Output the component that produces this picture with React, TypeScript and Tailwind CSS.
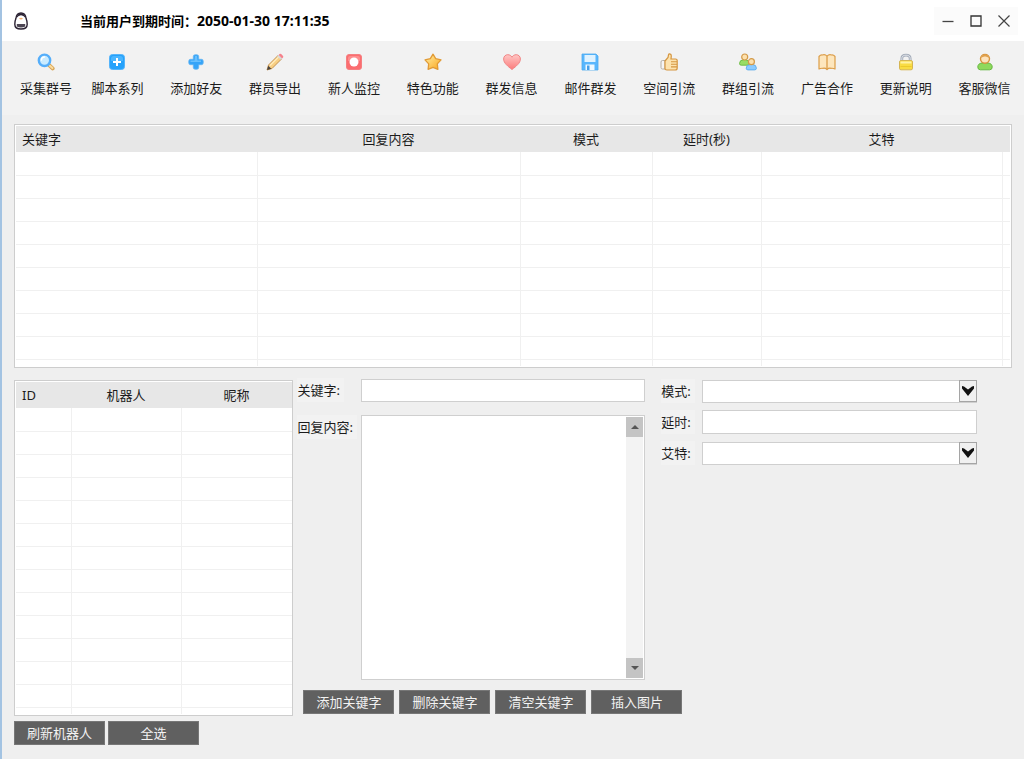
import React from "react";

const SearchIcon = () => (
  <svg className="w-[18px] h-[18px]" viewBox="0 0 18 18" fill="none">
    <path d="M12.400 12.400l3.200 3" stroke="#d9a555" strokeWidth="4" strokeLinecap="round" />
    <path d="M12.800 12.700l2.600 2.400" stroke="#fbdc9f" strokeWidth="2" strokeLinecap="round" />
    <circle cx="7.500" cy="7.300" r="5.700" fill="#c9ebff" stroke="#55aefa" strokeWidth="2.400" />
    <path d="M4.500 7a3 3 0 013-3" stroke="#fff" strokeWidth="1.400" strokeLinecap="round" />
  </svg>
);

const PlusBoxIcon = () => (
  <svg className="w-[18px] h-[18px]" viewBox="0 0 18 18" fill="none">
    <rect x="1.500" y="1.500" width="15" height="15" rx="3" fill="#25a2fb" stroke="#55b4fb" />
    <path d="M3 5.500C3 4 4 3 5.500 3h7C14 3 15 4 15 5.500V8H3z" fill="#4ab5ff" />
    <path d="M9 5v8M5 9h8" stroke="#fff" strokeWidth="2" />
  </svg>
);

const PlusIcon = () => (
  <svg className="w-[18px] h-[18px]" viewBox="0 0 18 18">
    <path d="M8 1.800h2q1.700 0 1.700 1.700v2.800h2.800q1.700 0 1.700 1.700v2q0 1.700-1.700 1.700h-2.800v2.800q0 1.700-1.700 1.700H8q-1.700 0-1.700-1.700v-2.800H3.500q-1.700 0-1.700-1.700V8q0-1.700 1.700-1.700h2.800V3.500q0-1.700 1.700-1.700z" fill="#35a4f8" stroke="#62b4f3" strokeWidth=".8" />
    <path d="M8 3h2l.5 4.500H14V9H3.500V7.500h4z" fill="#68bffd" />
  </svg>
);

const PencilIcon = () => (
  <svg className="w-[18px] h-[18px]" viewBox="0 0 18 18">
    <path d="M1 17l1.500-5L12 2.500l3.500 3.500L6 15.500z" fill="#f8cf84" stroke="#bc8845" strokeWidth=".9" />
    <path d="M4 12.500L12.500 4" stroke="#ffecbb" strokeWidth="1.500" />
    <path d="M1 17l1.300-4.300 3 3z" fill="#4a4540" />
    <path d="M11.200 3.300l1.400-1.400 3.500 3.500-1.400 1.400z" fill="#d7d9dd" />
    <path d="M12.600 1.900l.9-.9q.9-.7 1.700.1l1.800 1.800q.7.800 0 1.600l-.9.9z" fill="#f5818b" />
  </svg>
);

const RecordIcon = () => (
  <svg className="w-[18px] h-[18px]" viewBox="0 0 18 18">
    <rect x="1.500" y="1.500" width="15" height="15" rx="2.500" fill="#fb6d70" stroke="#f57f80" />
    <path d="M3 5q0-2 2-2h8q2 0 2 2v3H3z" fill="#fd8d8e" />
    <circle cx="9" cy="9" r="4.500" fill="#fff" />
  </svg>
);

const StarIcon = () => (
  <svg className="w-[18px] h-[18px]" viewBox="0 0 18 18">
    <defs>
      <linearGradient id="starFill" x1="0" y1="0" x2="1" y2="1">
        <stop offset="0" stopColor="#fff0a8" />
        <stop offset="1" stopColor="#fba61d" />
      </linearGradient>
    </defs>
    <path d="M9 1.200l2.700 4.500 5.300 1.200-3.700 4 .6 5.400L9 14.300l-4.900 2 .6-5.400-3.700-4 5.300-1.200z" fill="url(#starFill)" stroke="#e19a35" strokeWidth="1.300" strokeLinejoin="round" />
  </svg>
);

const HeartIcon = () => (
  <svg className="w-[18px] h-[18px]" viewBox="0 0 18 18">
    <defs>
      <linearGradient id="heartFill" x1="0" y1="0" x2="0" y2="1">
        <stop offset="0" stopColor="#ffc7c5" />
        <stop offset="1" stopColor="#fb7b7b" />
      </linearGradient>
    </defs>
    <path d="M9 16.500C5 13.500.600 10 .600 6.100.600 3.300 2.600 1.700 4.800 1.700 6.700 1.700 8.200 2.700 9 4.200c.8-1.500 2.300-2.500 4.200-2.500 2.200 0 4.200 1.600 4.200 4.400 0 3.900-4.400 7.400-8.400 10.400z" fill="url(#heartFill)" stroke="#f08484" />
  </svg>
);

const DiskIcon = () => (
  <svg className="w-[18px] h-[18px]" viewBox="0 0 18 18">
    <path d="M1 1h14l2 2v14H1z" fill="#58b6fd" stroke="#4da9ef" strokeWidth=".8" />
    <path d="M3.500 2h11v7h-11z" fill="#dff2ff" />
    <path d="M4.500 11.500h9V17h-9z" fill="#eef8ff" />
    <path d="M6 12.500h2.500V17H6z" fill="#469fe8" />
  </svg>
);

const ThumbIcon = () => (
  <svg className="w-[18px] h-[18px]" viewBox="0 0 18 18">
    <path d="M1 9q0-1.500 1.500-1.500H5V16H2.500Q1 16 1 14.500z" fill="#f5f5f5" stroke="#b5b0a6" />
    <path d="M5 8l3-3.500.5-2.700Q8.700.800 9.700.900q1.700.2 1.600 2.100L11 6h4.500q1.700 0 1.700 1.500V15q0 2-2 2H7q-2 0-2-1.500z" fill="#fde3ae" stroke="#d59640" strokeWidth="1.200" />
    <path d="M11 8.700h6M11 11.300h6M11 13.900h6" stroke="#d59640" strokeWidth="1.100" />
  </svg>
);

const GroupIcon = () => (
  <svg className="w-[18px] h-[18px]" viewBox="0 0 18 18">
    <path d="M.500 10.500Q.500 7 4.500 6.700h2.200q3.400.5 3.400 3.800 0 1.700-1.700 1.700H2.200q-1.700 0-1.700-1.700z" fill="#99dd65" stroke="#68b93f" strokeWidth=".9" />
    <circle cx="5.700" cy="4" r="3" fill="#fde0ac" stroke="#d39a49" strokeWidth="1.200" />
    <path d="M7.200 15.200q0-3.400 4-3.700h2.400q3.800.3 3.800 3.700 0 1.700-1.700 1.700H8.900q-1.700 0-1.700-1.700z" fill="#8ccbff" stroke="#5aabec" strokeWidth=".9" />
    <circle cx="12.400" cy="8.700" r="3" fill="#fde0ac" stroke="#d39a49" strokeWidth="1.200" />
  </svg>
);

const BookIcon = () => (
  <svg className="w-[18px] h-[18px]" viewBox="0 0 18 18">
    <path d="M9 3.200Q7 1 4.500 2 2.500 1.700 1 3.500V16q2-1 4-.7 2.400-.4 4 1.200 1.600-1.600 4-1.200 2-.3 4 .7V3.500Q15.500 1.700 13.500 2 11 1 9 3.200z" fill="#fde6bd" stroke="#dc9d47" strokeWidth="1.200" strokeLinejoin="round" />
    <path d="M9 3.200v13" stroke="#dc9d47" strokeWidth="1.300" />
  </svg>
);

const LockIcon = () => (
  <svg className="w-[18px] h-[18px]" viewBox="0 0 18 18" fill="none">
    <path d="M4.800 8V5.700Q4.800 2.200 9 2.200t4.200 3.500V8" stroke="#a5adba" strokeWidth="2.800" />
    <path d="M4.800 8V5.700Q4.800 2.200 9 2.200t4.200 3.500V8" stroke="#dde1e8" />
    <rect x="2.500" y="7.500" width="13" height="9.300" rx="1.500" fill="#f9dc43" stroke="#d5b553" />
    <path d="M3.500 9.500h11" stroke="#fff2a4" strokeWidth="2" />
    <path d="M3.500 13.500h11" stroke="#ecca2d" />
  </svg>
);

const UserIcon = () => (
  <svg className="w-[18px] h-[18px]" viewBox="0 0 18 18">
    <path d="M1.800 14Q1.800 10.500 6 10h6q4.200.5 4.200 4 0 2.800-2.500 2.800H4.300Q1.800 16.800 1.800 14z" fill="#8fd95c" stroke="#67b843" />
    <ellipse cx="9" cy="5.800" rx="4.500" ry="4.400" fill="#fde3bd" stroke="#d7953f" strokeWidth="1.400" />
    <path d="M5 5Q5.500 1.500 9 1.500T13 5Q11 3.300 9 3.500 7 3.300 5 5z" fill="#e0a04c" />
  </svg>
);

const PenguinLogo = () => (
  <svg className="w-[14px] h-[18px]" viewBox="0 0 14 18">
    <path d="M7 1C4 1 2.300 3.300 1.900 6.500 1 8.500.800 10.500.800 12.200.800 15.300 3 17 7 17s6.200-1.700 6.200-4.800c0-1.700-.2-3.700-1.100-5.700C11.700 3.300 10 1 7 1z" fill="#fff" stroke="#2b2233" strokeWidth="1.400" />
    <path d="M2.500 6Q3.400 1.300 7 1.300T11.500 6Q9.500 3.300 7 3.300T2.500 6z" fill="#2b2233" />
    <path d="M5 6.500q2-1.300 4 0-2 1.800-4 0z" fill="#f9b36f" />
    <path d="M2.800 12h8.400v2.600q-4.200 2-8.400 0z" fill="#4c4553" />
  </svg>
);

const tools = [
  { label: "采集群号", Icon: SearchIcon },
  { label: "脚本系列", Icon: PlusBoxIcon },
  { label: "添加好友", Icon: PlusIcon },
  { label: "群员导出", Icon: PencilIcon },
  { label: "新人监控", Icon: RecordIcon },
  { label: "特色功能", Icon: StarIcon },
  { label: "群发信息", Icon: HeartIcon },
  { label: "邮件群发", Icon: DiskIcon },
  { label: "空间引流", Icon: ThumbIcon },
  { label: "群组引流", Icon: GroupIcon },
  { label: "广告合作", Icon: BookIcon },
  { label: "更新说明", Icon: LockIcon },
  { label: "客服微信", Icon: UserIcon },
];

interface Column {
  label: string;
  width: string;
}

const keywordColumns: Column[] = [
  { label: "关键字", width: "w-[241px]" },
  { label: "回复内容", width: "w-[263px]" },
  { label: "模式", width: "w-[132px]" },
  { label: "延时(秒)", width: "w-[109px]" },
  { label: "艾特", width: "w-[241px]" },
  { label: "", width: "w-[8px]" },
];

const robotColumns: Column[] = [
  { label: "ID", width: "w-[55px]" },
  { label: "机器人", width: "w-[110px]" },
  { label: "昵称", width: "w-[111px]" },
];

const GridTable: React.FC<{ name: string; columns: Column[]; rows: number }> = ({ name, columns, rows }) => (
  <div className="bg-white border border-[#cdcdcd] p-px">
    <table aria-label={name} className="w-full table-fixed border-collapse">
      <thead>
        <tr className="h-[26px] bg-[#e7e7e7]">
          {columns.map((col, i) => (
            <th
              key={i}
              className={`${col.width} p-0 font-normal leading-5 ${i === 0 ? "text-left pl-[6px]" : "text-center"}`}
            >
              {col.label}
            </th>
          ))}
        </tr>
      </thead>
      <tbody>
        {Array.from({ length: rows }, (_, r) => (
          <tr key={r} className="h-[23px] border-b border-[#f0f0f0]">
            {columns.map((_, c) => (
              <td key={c} className="p-0 border-r border-[#f0f0f0] last:border-r-0" />
            ))}
          </tr>
        ))}
        {/* sliver of the next row */}
        <tr className="h-[7px]">
          {columns.map((_, c) => (
            <td key={c} className="p-0 border-r border-[#f0f0f0] last:border-r-0" />
          ))}
        </tr>
      </tbody>
    </table>
  </div>
);

const ActionButton: React.FC<{ children: React.ReactNode }> = ({ children }) => (
  <button type="button" className="w-[91px] h-6 bg-[#606060] border border-[#777777] text-[#f2f2f2] leading-5">
    {children}
  </button>
);

const FieldLabel: React.FC<{ htmlFor: string; width: string; children: React.ReactNode }> = ({ htmlFor, width, children }) => (
  <div className={`${width} shrink-0`}>
    <label htmlFor={htmlFor} className="inline-block bg-[#f2f2f2] pr-1 leading-6 align-top">
      {children}
    </label>
  </div>
);

const SelectField: React.FC<{ id: string }> = ({ id }) => (
  <div className="relative flex-1">
    <select id={id} className="block w-full h-[23px] appearance-none bg-white border border-[#cfcfcf] outline-none pl-1" />
    <span className="absolute right-0 top-0 w-[18px] h-[22px] bg-[#f0f0f0] border border-[#a5a5a5] pointer-events-none flex items-center justify-center">
      <svg className="w-3 h-3" viewBox="0 0 12 12">
        <path d="M0 1l2 .5 4 3 4-3 2-.5v2.500L6 11 0 3.500z" fill="#111" />
      </svg>
    </span>
  </div>
);

const App: React.FC = () => {
  return (
    <div className="min-h-screen bg-[#efefef] border-l-2 border-[#a3c3e2] text-[13px] text-[#1c1c1c] font-['Noto_Sans','Noto_Sans_CJK_SC',sans-serif]">
      {/* Title bar */}
      <header className="h-[41px] bg-white flex items-center pl-3 pr-[6px]">
        <PenguinLogo />
        <h1 className="ml-[52px] flex-1 font-bold text-black leading-5">
          当前用户到期时间：<span className="text-sm leading-5">2050-01-30 17:11:35</span>
        </h1>
        <div className="flex items-center bg-[#fbfbfb] h-7">
          <button type="button" aria-label="最小化" className="w-7 h-7 flex items-center justify-center">
            <svg className="w-3 h-3" viewBox="0 0 12 12"><path d="M.500 6.500h11" stroke="#444" strokeWidth="1.300" /></svg>
          </button>
          <button type="button" aria-label="最大化" className="w-7 h-7 flex items-center justify-center">
            <svg className="w-3 h-3" viewBox="0 0 12 12"><path d="M1 1h10v10H1z" fill="none" stroke="#333" strokeWidth="1.300" /></svg>
          </button>
          <button type="button" aria-label="关闭" className="w-7 h-7 flex items-center justify-center">
            <svg className="w-3 h-3" viewBox="0 0 12 12"><path d="M.500.500l11 11M11.500.500l-11 11" stroke="#444" strokeWidth="1.200" /></svg>
          </button>
        </div>
      </header>

      {/* Toolbar */}
      <nav className="grid grid-cols-[64px_repeat(12,minmax(0,1fr))] h-[74px] pt-3 pl-3 bg-[#f2f2f2]">
        {tools.map(({ label, Icon }) => (
          <button key={label} type="button" className="flex flex-col items-center self-start gap-[7px] whitespace-nowrap leading-5">
            <Icon />
            {label}
          </button>
        ))}
      </nav>

      <main className="pl-3 pr-3 pt-[9px]">
        <GridTable name="关键字列表" columns={keywordColumns} rows={9} />

        <div className="flex gap-1 mt-[10px]">
          {/* Robots */}
          <section className="w-[28%] shrink-0 pt-[2px]">
            <GridTable name="机器人列表" columns={robotColumns} rows={13} />
            <div className="flex gap-[3px] mt-[5px]">
              <ActionButton>刷新机器人</ActionButton>
              <ActionButton>全选</ActionButton>
            </div>
          </section>

          {/* Keyword form */}
          <form className="flex-1 min-w-0">
            <div className="grid grid-cols-[348fr_316fr] gap-4 pr-[35px]">
              <div className="flex flex-col gap-[13px]">
                <div className="flex items-center">
                  <FieldLabel htmlFor="keyword" width="w-16">关键字:</FieldLabel>
                  <input id="keyword" type="text" className="flex-1 min-w-0 h-[23px] bg-white border border-[#cfcfcf] outline-none px-1" />
                </div>
                <div className="flex items-start">
                  <FieldLabel htmlFor="reply" width="w-16">回复内容:</FieldLabel>
                  <div className="flex flex-1 min-w-0 h-[265px] bg-white border border-[#cfcfcf] p-px">
                    <textarea id="reply" className="flex-1 min-w-0 resize-none outline-none px-1" />
                    <div className="w-[17px] bg-[#f3f3f3] flex flex-col justify-between">
                      <button type="button" aria-label="向上滚动" className="h-5 bg-[#c4c4c4] flex items-center justify-center">
                        <svg className="w-2 h-1" viewBox="0 0 8 4"><path d="M4 0l4 4H0z" fill="#555" /></svg>
                      </button>
                      <button type="button" aria-label="向下滚动" className="h-5 bg-[#c4c4c4] flex items-center justify-center">
                        <svg className="w-2 h-1" viewBox="0 0 8 4"><path d="M0 0h8L4 4z" fill="#555" /></svg>
                      </button>
                    </div>
                  </div>
                </div>
              </div>

              <div className="flex flex-col gap-[7px] pt-px">
                <div className="flex items-center">
                  <FieldLabel htmlFor="mode" width="w-[41px]">模式:</FieldLabel>
                  <SelectField id="mode" />
                </div>
                <div className="flex items-center">
                  <FieldLabel htmlFor="delay" width="w-[41px]">延时:</FieldLabel>
                  <input id="delay" type="text" className="flex-1 min-w-0 h-6 bg-white border border-[#cfcfcf] outline-none px-1" />
                </div>
                <div className="flex items-center">
                  <FieldLabel htmlFor="at" width="w-[41px]">艾特:</FieldLabel>
                  <SelectField id="at" />
                </div>
              </div>
            </div>

            <div className="flex gap-[5px] mt-[10px] pl-[6px]">
              <ActionButton>添加关键字</ActionButton>
              <ActionButton>删除关键字</ActionButton>
              <ActionButton>清空关键字</ActionButton>
              <ActionButton>插入图片</ActionButton>
            </div>
          </form>
        </div>
      </main>
    </div>
  );
};

export default App;
